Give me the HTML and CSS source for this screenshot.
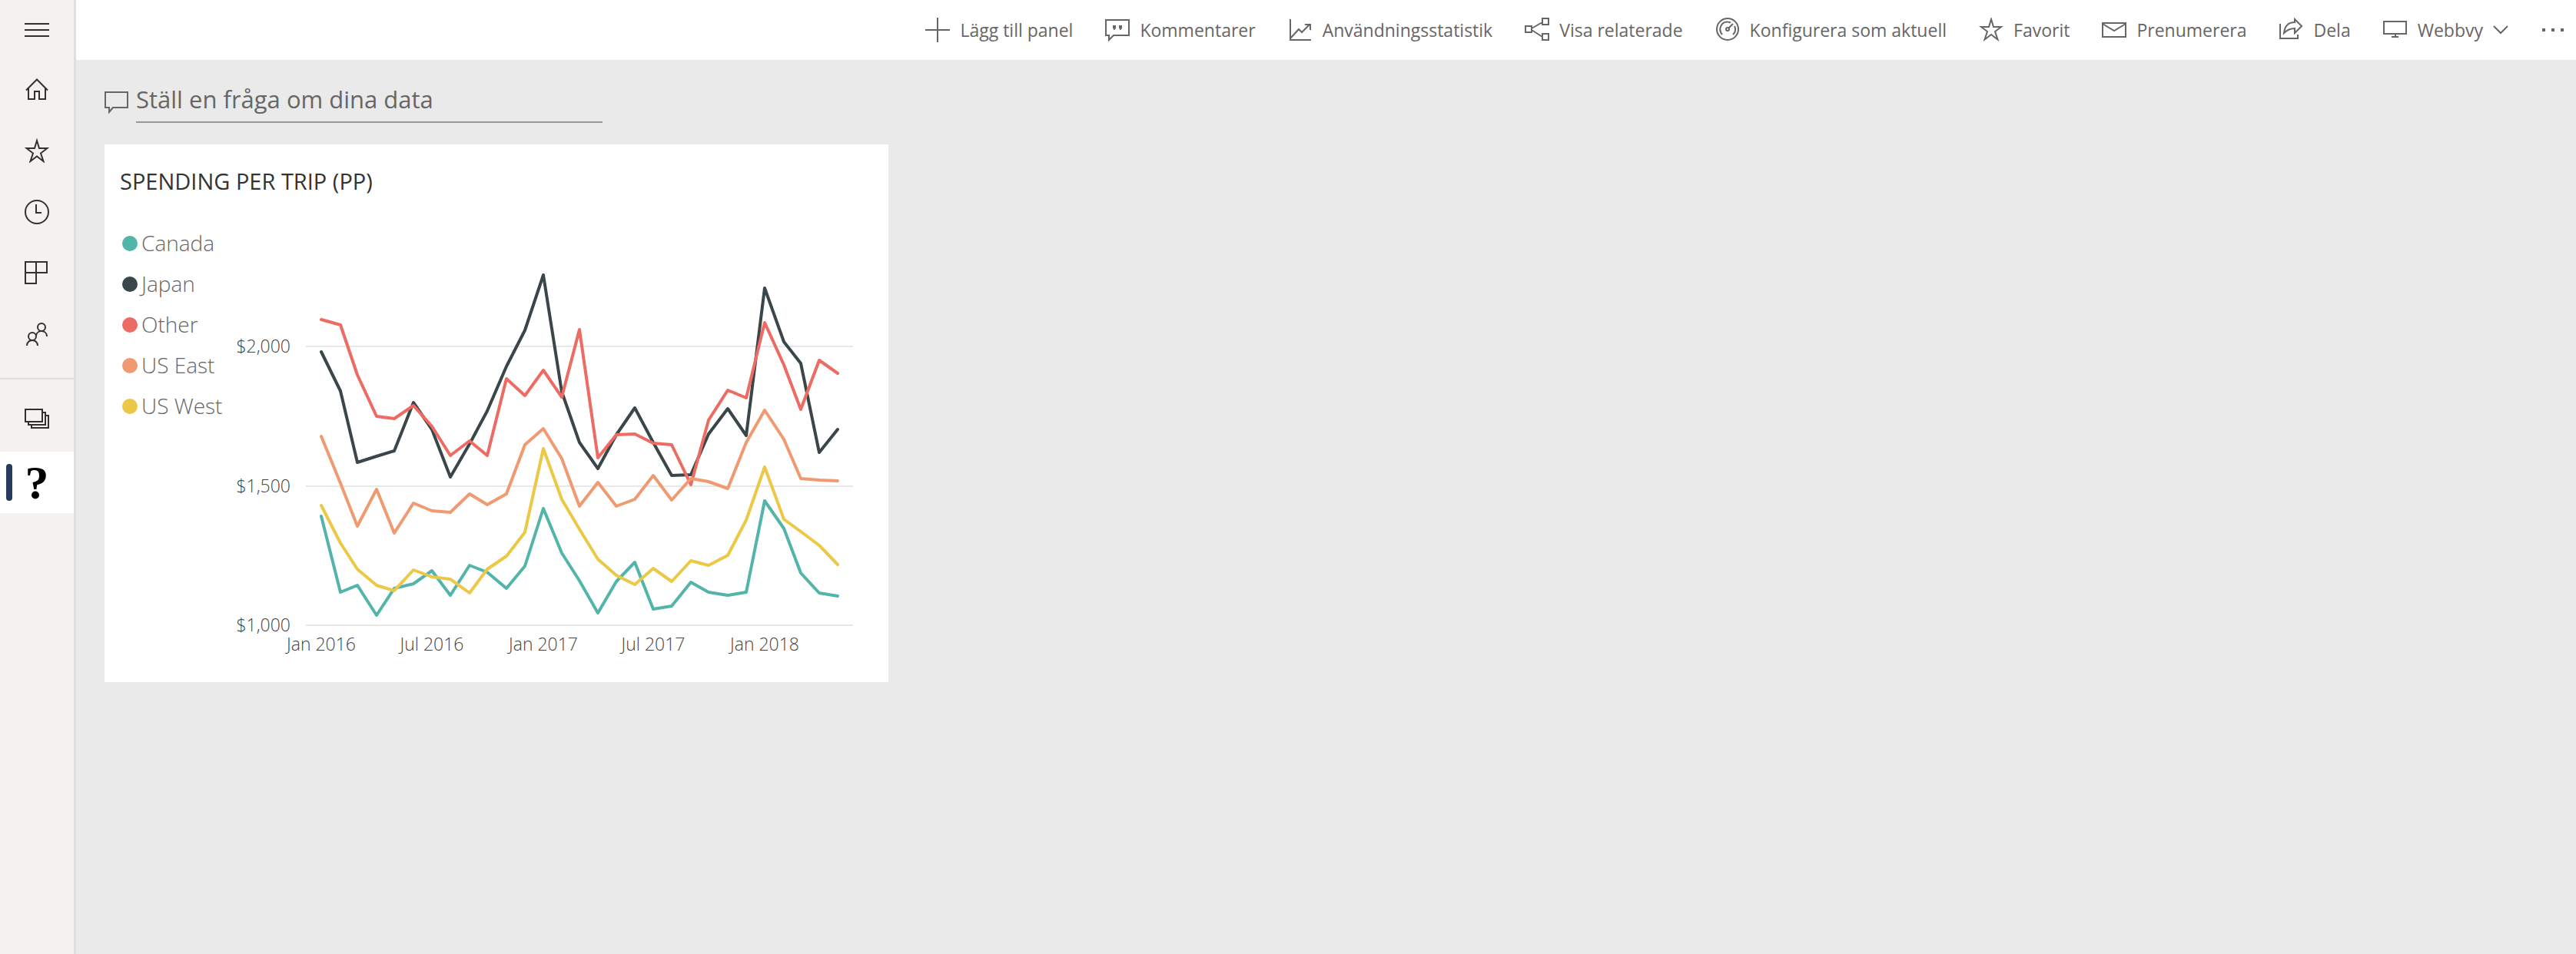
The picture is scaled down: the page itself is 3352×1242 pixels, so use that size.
FILE: index.html
```html
<!DOCTYPE html>
<html lang="sv">
<head>
<meta charset="utf-8">
<title>Spending per trip</title>
<link rel="stylesheet" href="styles.css">
</head>
<body>
<div class="app">
  <nav class="rail" aria-label="Navigering">
    <button class="rail-item rail-menu" aria-label="Meny"><svg class="icon" viewBox="0 0 32 32"><path d="M0 8h32M0 16h32M0 24h32"/></svg></button>
    <a class="rail-item" href="#" aria-label="Start"><svg class="icon" viewBox="0 0 32 32"><path d="M2 17.500 16 3.500 30 17.500M5 15V29H13V19H19V29H27V15"/></svg></a>
    <a class="rail-item" href="#" aria-label="Favoriter"><svg class="icon" viewBox="0 0 32 32"><path d="M16 3 19 13H29.500L21 19.500 24.500 30 16 23.500 7.500 30 11 19.500 2.500 13H13Z"/></svg></a>
    <a class="rail-item" href="#" aria-label="Senaste"><svg class="icon" viewBox="0 0 32 32"><circle cx="16" cy="16" r="15"/><path d="M15 6V17H22"/></svg></a>
    <a class="rail-item" href="#" aria-label="Appar"><svg class="icon" viewBox="0 0 32 32"><path d="M1 1H29V15H1ZM15 1V29H1V15"/></svg></a>
    <a class="rail-item" href="#" aria-label="Delat med mig"><svg class="icon" viewBox="0 0 32 32"><circle cx="22" cy="6" r="5"/><circle cx="10" cy="18" r="5"/><path d="M3 30C3 20.500 17 20.500 17 30M15 17C16 9 29 9 29 18"/></svg></a>
    <hr class="rail-line">
    <a class="rail-item" href="#" aria-label="Arbetsytor"><svg class="icon" viewBox="0 0 32 32"><path d="M1 3H23V19H1ZM23 7H27V23H5V19M27 11H31V27H9V23"/></svg></a>
    <a class="rail-item rail-current" href="#" aria-label="Aktuell arbetsyta">?</a>
  </nav>
  <div class="page">
    <header class="toolbar">
      <button class="tool"><svg class="icon" viewBox="0 0 32 32"><path d="M16 0V32M0 16H32"/></svg>Lägg till panel</button>
      <button class="tool"><svg class="icon" viewBox="0 0 32 32"><path d="M1 3H31V23H11L5 29V23H1Z"/><path class="solid" d="M10 10h4v4l-2 2h-1v-2h-1zM18 10h4v4l-2 2h-1v-2h-1z"/></svg>Kommentarer</button>
      <button class="tool"><svg class="icon" viewBox="0 0 32 32"><path d="M3 2V29H30M3 27 14 15 18 19 28 9M22 9H29V16"/></svg>Användningsstatistik</button>
      <button class="tool"><svg class="icon" viewBox="0 0 32 32"><path d="M1 11H9V19H1ZM23 1H31V9H23ZM23 21H31V29H23ZM9 14 23 6M9 16 23 25"/></svg>Visa relaterade</button>
      <button class="tool"><svg class="icon" viewBox="0 0 32 32"><circle cx="16" cy="15" r="14"/><circle cx="16" cy="15" r="2"/><path d="M17.500 13.500 23 8M9 22C3 15 8 5 16 5.500C18 5.500 19 6 20 6.500M25 11C27 15 26 19 23 22"/></svg>Konfigurera som aktuell</button>
      <button class="tool"><svg class="icon" viewBox="0 0 32 32"><path d="M16 2 19 12H29L21 18 24.500 28.500 16 22 7.500 28.500 11 18 3 12H13Z"/></svg>Favorit</button>
      <button class="tool"><svg class="icon" viewBox="0 0 32 32"><path d="M1 7H31V25H1ZM1 8 16 17 31 8"/></svg>Prenumerera</button>
      <button class="tool"><svg class="icon" viewBox="0 0 32 32"><path d="M2 8V27H25V22M7 20C8 11 13 6 21 6V2L30 11 21 20V14C15 14 11 16 7 20Z"/></svg>Dela</button>
      <button class="tool"><svg class="icon" viewBox="0 0 32 32"><path d="M1 5H30V21H1ZM16 21V25M11 25H20"/></svg>Webbvy<svg class="icon chevron" viewBox="0 0 20 32"><path d="M1 11 10 20 19 11"/></svg></button>
      <button class="tool" aria-label="Fler alternativ"><svg class="icon" viewBox="0 0 32 32"><path class="solid" d="M2 14h4v4h-4zM14 14h4v4h-4zM26 14h4v4h-4z"/></svg></button>
    </header>
    <main class="board">
      <label class="ask">
        <svg class="icon" viewBox="0 0 32 32"><path d="M1 4H30V24H11L6 30V24H1Z"/></svg>
        <input class="ask-input" type="text" placeholder="Ställ en fråga om dina data" aria-label="Ställ en fråga om dina data">
      </label>
      <section class="tile">
        <h2 class="tile-title">SPENDING PER TRIP (PP)</h2>
        <div class="tile-body">
          <ul class="legend">
            <li class="legend-item canada">Canada</li>
            <li class="legend-item japan">Japan</li>
            <li class="legend-item other">Other</li>
            <li class="legend-item east">US East</li>
            <li class="legend-item west">US West</li>
          </ul>
          <svg class="chart" viewBox="290 290 846 578" role="img" aria-label="Spending per trip">
            <path class="grid" d="M398 451H1110M398 633H1110M398 814H1110"/>
            <g class="axis axis-y">
              <text x="378" y="459">$2,000</text>
              <text x="378" y="641">$1,500</text>
              <text x="378" y="822">$1,000</text>
            </g>
            <g class="axis axis-x">
              <text x="418" y="847">Jan 2016</text>
              <text x="562" y="847">Jul 2016</text>
              <text x="707" y="847">Jan 2017</text>
              <text x="850" y="847">Jul 2017</text>
              <text x="995" y="847">Jan 2018</text>
            </g>
            <polyline class="line canada" points="418,672 443,771 465,762 490,801 513,766 538,760 562,743 586,775 611,736 634,745 659,766 683,737 707,662 731,720 754,756 778,798 802,757 826,732 850,793 874,789 899,758 922,771 947,775 971,771 995,652 1020,688 1042,746 1066,772 1090,776"/>
            <polyline class="line japan" points="418,458 443,509 465,602 490,594 513,587 538,524 562,559 586,621 611,578 634,535 659,477 683,430 707,358 731,510 754,576 778,610 802,566 826,531 850,576 874,619 899,618 922,565 947,532 971,567 995,375 1020,445 1042,473 1066,589 1090,559"/>
            <polyline class="line other" points="418,416 443,423 465,488 490,542 513,545 538,528 562,555 586,593 611,574 634,593 659,493 683,515 707,482 731,517 754,429 778,596 802,566 826,565 850,577 874,579 899,631 922,547 947,508 971,518 995,420 1020,475 1042,533 1066,469 1090,486"/>
            <polyline class="line east" points="418,568 443,629 465,685 490,637 513,694 538,655 562,665 586,667 611,643 634,657 659,643 683,579 707,558 731,597 754,659 778,628 802,659 826,650 850,619 874,651 899,623 922,627 947,636 971,576 995,534 1020,572 1042,623 1066,625 1090,626"/>
            <polyline class="line west" points="418,658 443,707 465,741 490,762 513,769 538,742 562,751 586,754 611,772 634,741 659,724 683,693 707,584 731,650 754,689 778,728 802,749 826,761 850,740 874,757 899,730 922,736 947,723 971,677 995,608 1020,676 1042,692 1066,710 1090,735"/>
          </svg>
        </div>
      </section>
    </main>
  </div>
</div>
</body>
</html>
```
FILE: styles.css
```css
* { box-sizing: border-box; }

body {
  margin: 0;
  background: #eaeaea;
  color: #333;
  font-family: "Open Sans", "Noto Sans", sans-serif;
}

.app { display: flex; min-height: 100vh; }

.page { flex: 1; min-width: 0; }

.icon {
  flex: none;
  width: 32px;
  height: 32px;
  fill: none;
  stroke: currentColor;
  stroke-width: 2;
}

.icon .solid { fill: currentColor; stroke: none; }

.rail {
  display: flex;
  flex-direction: column;
  flex: none;
  width: 99px;
  border-right: 3px solid #e1dfdd;
  background: #f3f2f0;
}

.rail-item {
  display: flex;
  align-items: center;
  justify-content: center;
  height: 80px;
  padding: 0 0 4px;
  border: 0;
  background: none;
  color: #323130;
  text-decoration: none;
}

.rail-menu { height: 78px; padding: 0; }

.rail-line {
  width: 100%;
  height: 2px;
  margin: 14px 0;
  border: 0;
  background: #e1dfdd;
}

.rail-current {
  position: relative;
  padding: 0;
  background: #fff;
  color: #000;
  font: bold 62px/80px "Liberation Serif", serif;
}

.rail-current::before {
  content: "";
  position: absolute;
  top: 16px;
  left: 8px;
  width: 8px;
  height: 48px;
  border-radius: 4px;
  background: #273a5e;
}

.toolbar {
  display: flex;
  align-items: center;
  justify-content: flex-end;
  gap: 42px;
  height: 78px;
  padding-right: 14px;
  background: #fff;
}

.tool {
  display: flex;
  align-items: center;
  gap: 13px;
  padding: 0;
  border: 0;
  background: none;
  color: #666;
  font: 23px/32px "Open Sans", "Noto Sans", sans-serif;
  white-space: nowrap;
}

.chevron { width: 20px; }

.board { padding: 26px 37px; }

.ask {
  display: flex;
  align-items: center;
  gap: 9px;
  max-width: 648px;
  color: #666;
}

.ask-input {
  flex: 1;
  min-width: 0;
  height: 56px;
  padding: 0 0 4px;
  border: 0;
  border-bottom: 2px solid #999;
  background: none;
  color: #666;
  font: 31px/40px "Open Sans", "Noto Sans", sans-serif;
}

.ask-input::placeholder { color: #666; opacity: 1; }

.tile {
  max-width: 1020px;
  margin-top: 28px;
  padding: 28px 20px 20px;
  background: #fff;
}

.tile-title {
  margin: 0 0 34px;
  font-size: 29px;
  font-weight: 400;
  line-height: 40px;
}

.tile-body { display: flex; align-items: flex-start; }

.legend {
  flex: none;
  width: 134px;
  margin: 0;
  padding: 0;
  list-style: none;
}

.legend-item {
  display: flex;
  align-items: center;
  gap: 5px;
  padding-left: 3px;
  color: #666;
  font-size: 28px;
  font-weight: 300;
  line-height: 53px;
  white-space: nowrap;
}

.legend-item::before {
  content: "";
  width: 20px;
  height: 20px;
  border-radius: 50%;
  background: var(--series);
}

.canada { --series: #53b5aa; }
.japan { --series: #3a4649; }
.other { --series: #ed6b62; }
.east { --series: #ef9a70; }
.west { --series: #ebc846; }

.chart { display: block; flex: 1; min-width: 0; }

.grid { stroke: #e8e8e8; stroke-width: 2; }

.axis { fill: #444; font-size: 23px; font-weight: 300; }
.axis-y { text-anchor: end; }
.axis-x { text-anchor: middle; }

.line {
  fill: none;
  stroke: var(--series);
  stroke-width: 4;
  stroke-linecap: round;
  stroke-linejoin: round;
}
```
